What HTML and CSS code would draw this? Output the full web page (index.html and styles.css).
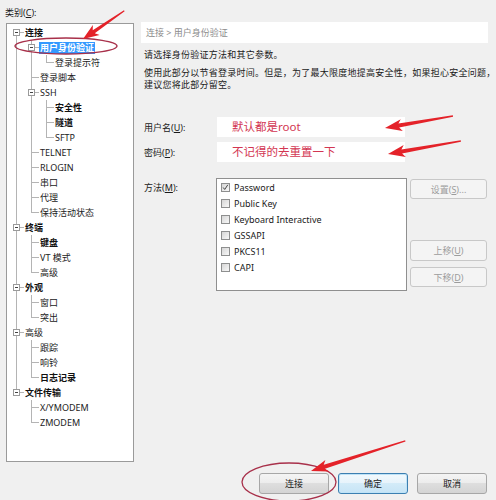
FILE: index.html
```html
<!DOCTYPE html>
<html lang="zh-CN">
<head>
<meta charset="utf-8">
<title>会话选项</title>
<link rel="stylesheet" href="styles.css">
</head>
<body>
<div class="dialog">
  <div class="main">
    <div class="left">
      <div class="cat-label">类别(<u>C</u>):</div>
      <div class="tree">
        <div class="row"><span class="c f x"><i></i></span><span class="lbl b">连接</span></div>
        <div class="row"><span class="c v"></span><span class="c t x"><i></i></span><span class="lbl b sel">用户身份验证</span></div>
        <div class="row"><span class="c v"></span><span class="c v"></span><span class="c l"></span><span class="lbl">登录提示符</span></div>
        <div class="row"><span class="c v"></span><span class="c t"></span><span class="lbl">登录脚本</span></div>
        <div class="row"><span class="c v"></span><span class="c t x"><i></i></span><span class="lbl">SSH</span></div>
        <div class="row"><span class="c v"></span><span class="c v"></span><span class="c t"></span><span class="lbl b">安全性</span></div>
        <div class="row"><span class="c v"></span><span class="c v"></span><span class="c t"></span><span class="lbl b">隧道</span></div>
        <div class="row"><span class="c v"></span><span class="c v"></span><span class="c l"></span><span class="lbl">SFTP</span></div>
        <div class="row"><span class="c v"></span><span class="c t"></span><span class="lbl">TELNET</span></div>
        <div class="row"><span class="c v"></span><span class="c t"></span><span class="lbl">RLOGIN</span></div>
        <div class="row"><span class="c v"></span><span class="c t"></span><span class="lbl">串口</span></div>
        <div class="row"><span class="c v"></span><span class="c t"></span><span class="lbl">代理</span></div>
        <div class="row"><span class="c v"></span><span class="c l"></span><span class="lbl">保持活动状态</span></div>
        <div class="row"><span class="c t x"><i></i></span><span class="lbl b">终端</span></div>
        <div class="row"><span class="c v"></span><span class="c t"></span><span class="lbl b">键盘</span></div>
        <div class="row"><span class="c v"></span><span class="c t"></span><span class="lbl">VT 模式</span></div>
        <div class="row"><span class="c v"></span><span class="c l"></span><span class="lbl">高级</span></div>
        <div class="row"><span class="c t x"><i></i></span><span class="lbl b">外观</span></div>
        <div class="row"><span class="c v"></span><span class="c t"></span><span class="lbl">窗口</span></div>
        <div class="row"><span class="c v"></span><span class="c l"></span><span class="lbl">突出</span></div>
        <div class="row"><span class="c t x"><i></i></span><span class="lbl">高级</span></div>
        <div class="row"><span class="c v"></span><span class="c t"></span><span class="lbl">跟踪</span></div>
        <div class="row"><span class="c v"></span><span class="c t"></span><span class="lbl">响铃</span></div>
        <div class="row"><span class="c v"></span><span class="c l"></span><span class="lbl b">日志记录</span></div>
        <div class="row"><span class="c l x"><i></i></span><span class="lbl b">文件传输</span></div>
        <div class="row"><span class="c e"></span><span class="c t"></span><span class="lbl">X/YMODEM</span></div>
        <div class="row"><span class="c e"></span><span class="c l"></span><span class="lbl">ZMODEM</span></div>
      </div>
    </div>
    <div class="right">
      <div class="crumb">连接 &gt; 用户身份验证</div>
      <p class="p1">请选择身份验证方法和其它参数。</p>
      <p class="p2">使用此部分以节省登录时间。但是，为了最大限度地提高安全性，如果担心安全问题，<br>建议您将此部分留空。</p>
      <div class="field f-user"><span class="flabel">用户名(<u>U</u>):</span><div class="input">默认都是root</div></div>
      <div class="field f-pass"><span class="flabel">密码(<u>P</u>):</span><div class="input">不记得的去重置一下</div></div>
      <div class="methods">
        <span class="mlabel">方法(<u>M</u>):</span>
        <div class="list">
          <div class="item"><span class="cb on"><svg viewBox="0 0 9 9" width="9" height="9"><polyline points="1.5,4.5 3.5,7 7.5,1" fill="none" stroke="#3a3a3a" stroke-width="1.2"/></svg></span>Password</div>
          <div class="item"><span class="cb"></span>Public Key</div>
          <div class="item"><span class="cb"></span>Keyboard Interactive</div>
          <div class="item"><span class="cb"></span>GSSAPI</div>
          <div class="item"><span class="cb"></span>PKCS11</div>
          <div class="item"><span class="cb"></span>CAPI</div>
        </div>
        <div class="side">
          <div class="btn dis b-set">设置(<u>S</u>)...</div>
          <div class="btn dis b-up">上移(<u>U</u>)</div>
          <div class="btn dis b-down">下移(<u>D</u>)</div>
        </div>
      </div>
    </div>
  </div>
  <div class="footer">
    <div class="btn">连接</div>
    <div class="btn def">确定</div>
    <div class="btn">取消</div>
  </div>
</div>
<svg class="annot" width="496" height="500" viewBox="0 0 496 500">
  <ellipse cx="66" cy="46" rx="51" ry="8" fill="none" stroke="#a8304a" stroke-width="1.3"/>
  <ellipse cx="289" cy="482" rx="47" ry="19" fill="none" stroke="#a8304a" stroke-width="1.3"/>
  <g fill="#e42229">
    <polygon transform="translate(83 39) rotate(145.7)" points="-50,-0.6 -13,-1.8 -16,-6 0,0 -16,6 -13,1.8 -50,0.6"/>
    <polygon transform="translate(385 128) rotate(170)" points="-69,-0.7 -14,-2 -17,-6 0,0 -17,6 -14,2 -69,0.7"/>
    <polygon transform="translate(388 154) rotate(169.9)" points="-74,-0.7 -14,-2 -17,-6 0,0 -17,6 -14,2 -74,0.7"/>
    <polygon transform="translate(311 471) rotate(162.3)" points="-99,-0.7 -14,-2 -17,-6 0,0 -17,6 -14,2 -99,0.7"/>
  </g>
</svg>
</body>
</html>
```
FILE: styles.css
```css
* { box-sizing: border-box; }
html, body { margin: 0; padding: 0; }
body {
  width: 496px;
  height: 500px;
  background: #f0f0f0;
  font-family: "Noto Sans", "Noto Sans CJK SC", sans-serif;
  font-size: 9px;
  color: #1a1a1a;
  position: relative;
  overflow: hidden;
}
u { text-decoration: underline; }
.dialog { display: flex; flex-direction: column; padding: 5px 9px 0 5px; }
.main { display: flex; }
.left { width: 129px; flex: none; }
.cat-label { line-height: 16px; height: 16px; }
.tree {
  margin: 2px 0 0 1px;
  width: 128px;
  height: 439px;
  background: #fff;
  border: 1px solid #9a9a9a;
  padding: 1px 0 0 2px;
}
.row { display: flex; align-items: center; height: 15px; }
.c {
  --lc: #b4b4b4;
  width: 15px;
  height: 15px;
  flex: none;
  display: flex;
  align-items: center;
  justify-content: center;
}
.v { background: linear-gradient(var(--lc), var(--lc)) 7px 0 / 1px 15px no-repeat; }
.t {
  background: linear-gradient(var(--lc), var(--lc)) 7px 0 / 1px 15px no-repeat,
              linear-gradient(var(--lc), var(--lc)) 7px 7px / 8px 1px no-repeat;
}
.l {
  background: linear-gradient(var(--lc), var(--lc)) 7px 0 / 1px 8px no-repeat,
              linear-gradient(var(--lc), var(--lc)) 7px 7px / 8px 1px no-repeat;
}
.f {
  background: linear-gradient(var(--lc), var(--lc)) 7px 7px / 1px 8px no-repeat,
              linear-gradient(var(--lc), var(--lc)) 7px 7px / 8px 1px no-repeat;
}
.x i {
  width: 7px;
  height: 7px;
  border: 1px solid #9a9a9a;
  background: #fff;
  display: flex;
  align-items: center;
  justify-content: center;
}
.x i::before { content: ""; width: 3px; height: 1px; background: #444; }
.lbl { margin-left: 1px; line-height: 15px; white-space: nowrap; color: #222; }
.b { font-weight: bold; color: #111; }
.sel {
  background: #3399ff;
  color: #fff;
  line-height: 12px;
  padding: 0 1px;
  margin-left: 0;
}

.right { margin: 17px 0 0 7px; width: 347px; flex: none; }
.crumb {
  height: 21px;
  line-height: 21px;
  background: #fff;
  padding-left: 5px;
  color: #8c8c8c;
}
.p1, .p2 { margin: 0; padding-left: 3px; white-space: nowrap; letter-spacing: 0.25px; }
.p1 { margin-top: 5px; line-height: 13px; }
.p2 { margin-top: 6px; line-height: 12px; }
.field { display: flex; align-items: center; height: 20px; }
.f-user { margin-top: 26px; }
.f-pass { margin-top: 5px; }
.flabel { width: 76px; padding-left: 3px; flex: none; }
.input {
  width: 188px;
  height: 20px;
  background: #fff;
  color: #d33652;
  font-size: 11.5px;
  line-height: 20px;
  padding-left: 15px;
}
.methods { display: flex; align-items: flex-start; margin-top: 16px; }
.mlabel { width: 75px; padding-left: 3px; flex: none; line-height: 16px; margin-top: 2px; }
.list {
  width: 191px;
  height: 113px;
  flex: none;
  background: #fff;
  border: 1px solid #8f8f8f;
  padding-left: 4px;
}
.item { display: flex; align-items: center; height: 16px; gap: 4px; white-space: nowrap; }
.cb {
  width: 9px;
  height: 9px;
  flex: none;
  border: 1px solid #8e8f8f;
  background: linear-gradient(135deg, #d6d6d6, #f8f8f8);
  display: flex;
  align-items: center;
  justify-content: center;
}
.cb svg { display: block; }
.side { margin-left: 3px; width: 77px; flex: none; display: flex; flex-direction: column; }
.btn {
  height: 21px;
  display: flex;
  align-items: center;
  justify-content: center;
  border: 1px solid #a7a7a7;
  border-radius: 3px;
  background: linear-gradient(#f4f4f4, #ececec 50%, #dedede 50%, #d4d4d4);
  color: #1a1a1a;
}
.dis {
  background: #f4f4f4;
  border-color: #c8c8c8;
  color: #9c9c9c;
}
.b-set { margin-top: 1px; height: 20px; }
.b-up { margin-top: 41px; }
.b-down { margin-top: 6px; height: 20px; }
.footer { display: flex; justify-content: flex-end; gap: 9px; margin-top: 11px; }
.footer .btn { width: 70px; }
.def {
  border-color: #3c7fb1;
  background: linear-gradient(#f2f9fd, #e6f3fb 50%, #d3ebf8 50%, #c6e4f6);
  box-shadow: inset 0 0 0 1px #bfe3f7;
}
.annot { position: absolute; left: 0; top: 0; pointer-events: none; }
```
